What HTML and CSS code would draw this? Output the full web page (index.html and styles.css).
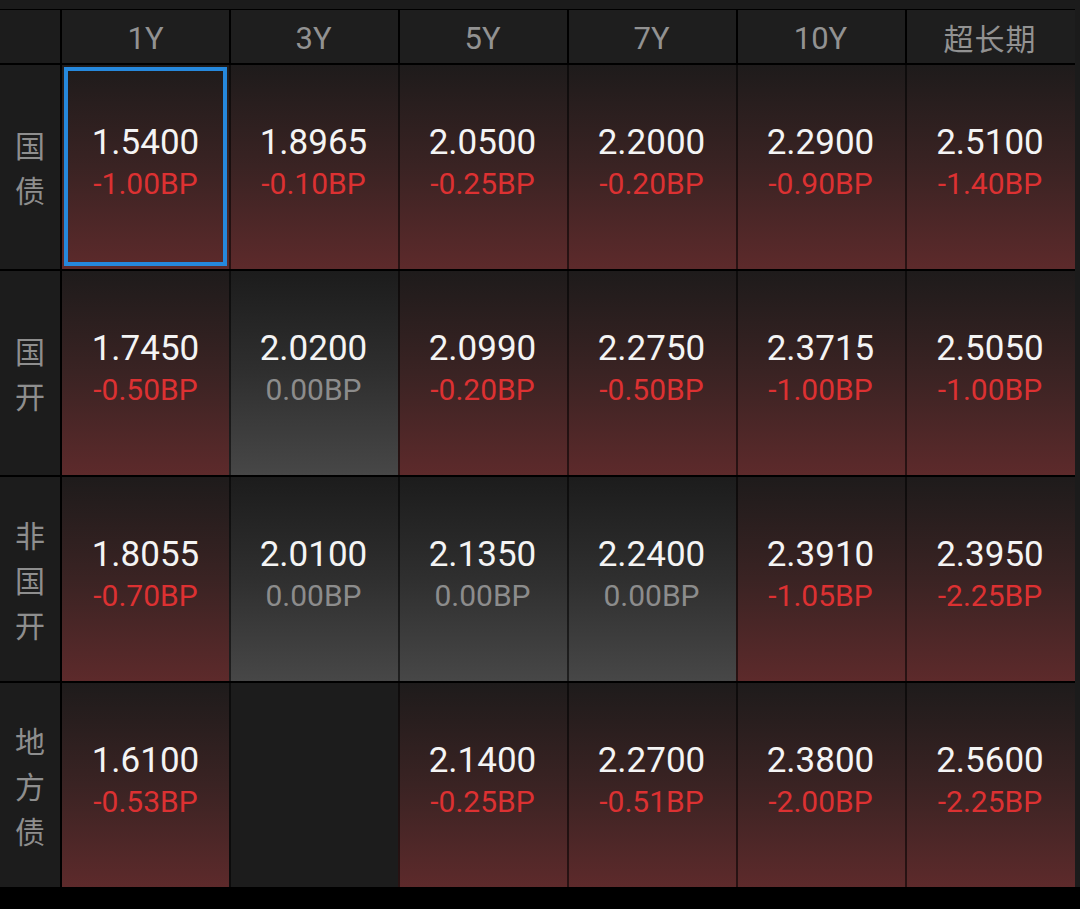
FILE: index.html
```html
<!DOCTYPE html>
<html lang="zh">
<head>
<meta charset="utf-8">
<link rel="stylesheet" href="styles.css">
</head>
<body>
<div class="screen">
  <div class="grid">
    <div class="corner"></div>
    <div class="head first">1Y</div>
    <div class="head">3Y</div>
    <div class="head">5Y</div>
    <div class="head">7Y</div>
    <div class="head">10Y</div>
    <div class="head cjk">超长期</div>

    <div class="label"><span class="vt">国债</span></div>
    <div class="cell up first selected"><div class="val">1.5400</div><div class="bp">-1.00BP</div></div>
    <div class="cell up"><div class="val">1.8965</div><div class="bp">-0.10BP</div></div>
    <div class="cell up"><div class="val">2.0500</div><div class="bp">-0.25BP</div></div>
    <div class="cell up"><div class="val">2.2000</div><div class="bp">-0.20BP</div></div>
    <div class="cell up"><div class="val">2.2900</div><div class="bp">-0.90BP</div></div>
    <div class="cell up"><div class="val">2.5100</div><div class="bp">-1.40BP</div></div>

    <div class="label"><span class="vt">国开</span></div>
    <div class="cell up first"><div class="val">1.7450</div><div class="bp">-0.50BP</div></div>
    <div class="cell flat"><div class="val">2.0200</div><div class="bp">0.00BP</div></div>
    <div class="cell up"><div class="val">2.0990</div><div class="bp">-0.20BP</div></div>
    <div class="cell up"><div class="val">2.2750</div><div class="bp">-0.50BP</div></div>
    <div class="cell up"><div class="val">2.3715</div><div class="bp">-1.00BP</div></div>
    <div class="cell up"><div class="val">2.5050</div><div class="bp">-1.00BP</div></div>

    <div class="label"><span class="vt">非国开</span></div>
    <div class="cell up first"><div class="val">1.8055</div><div class="bp">-0.70BP</div></div>
    <div class="cell flat"><div class="val">2.0100</div><div class="bp">0.00BP</div></div>
    <div class="cell flat"><div class="val">2.1350</div><div class="bp">0.00BP</div></div>
    <div class="cell flat"><div class="val">2.2400</div><div class="bp">0.00BP</div></div>
    <div class="cell up"><div class="val">2.3910</div><div class="bp">-1.05BP</div></div>
    <div class="cell up"><div class="val">2.3950</div><div class="bp">-2.25BP</div></div>

    <div class="label"><span class="vt">地方债</span></div>
    <div class="cell up first"><div class="val">1.6100</div><div class="bp">-0.53BP</div></div>
    <div class="cell empty"></div>
    <div class="cell up"><div class="val">2.1400</div><div class="bp">-0.25BP</div></div>
    <div class="cell up"><div class="val">2.2700</div><div class="bp">-0.51BP</div></div>
    <div class="cell up"><div class="val">2.3800</div><div class="bp">-2.00BP</div></div>
    <div class="cell up"><div class="val">2.5600</div><div class="bp">-2.25BP</div></div>
  </div>
</div>
</body>
</html>
```

FILE: styles.css
```css
html, body {
  margin: 0;
  padding: 0;
  background: #000;
}
body {
  width: 1080px;
  height: 909px;
  overflow: hidden;
  font-family: Roboto, "Noto Sans CJK SC", sans-serif;
}
.screen {
  width: 1080px;
  height: 887px;
  background: #1b1b1b;
  padding-top: 9px;
  box-sizing: border-box;
}
.grid {
  width: 1075px;
  display: grid;
  grid-template-columns: 62px 167px 169px 169px 169px 169px 170px;
  grid-template-rows: 53px 204px 204px 204px 204px;
  row-gap: 2px;
  background: #000;
  border-top: 1px solid #000;
}
.corner {
  background: #1c1c1c;
  border-right: 2px solid #000;
}
.head {
  background: #1e1e1e;
  color: #929292;
  font-size: 31px;
  display: flex;
  align-items: center;
  justify-content: center;
  box-shadow: inset 2px 0 0 #000;
  padding-top: 3px;
}
.head.first {
  box-shadow: none;
}
.head.cjk {
  font-family: "Noto Sans CJK SC", sans-serif;
  font-size: 30px;
  letter-spacing: 1px;
  padding-top: 0;
}
.label {
  background: #1c1c1c;
  border-right: 2px solid #000;
  display: flex;
  align-items: center;
  justify-content: center;
  color: #8e8e8e;
}
.vt {
  display: block;
  width: 1em;
  font-family: "Noto Sans CJK SC", sans-serif;
  font-size: 30px;
  line-height: 45px;
  word-break: break-all;
  text-align: center;
}
.cell {
  position: relative;
  display: flex;
  flex-direction: column;
  align-items: center;
  justify-content: center;
  padding-bottom: 8px;
  box-sizing: border-box;
  box-shadow: inset 2px 0 0 rgba(0, 0, 0, 0.55);
}
.cell.first {
  box-shadow: none;
}
.cell.up {
  background: linear-gradient(to bottom, #1e1b1b 0%, #3a2323 50%, #5d2a2b 100%);
}
.cell.flat {
  background: linear-gradient(to bottom, #1c1c1c 0%, #2f2f2f 50%, #474747 100%);
}
.cell.empty {
  background: #1c1c1c;
}
.val {
  color: #f4f4f4;
  font-size: 35px;
  line-height: 41px;
}
.bp {
  font-size: 30px;
  line-height: 41px;
  color: #dc3132;
}
.flat .bp {
  color: #8c8c8c;
}
.selected::after {
  content: "";
  position: absolute;
  left: 2px;
  top: 2px;
  right: 2px;
  bottom: 3px;
  border: 4px solid #2688dc;
}
```
